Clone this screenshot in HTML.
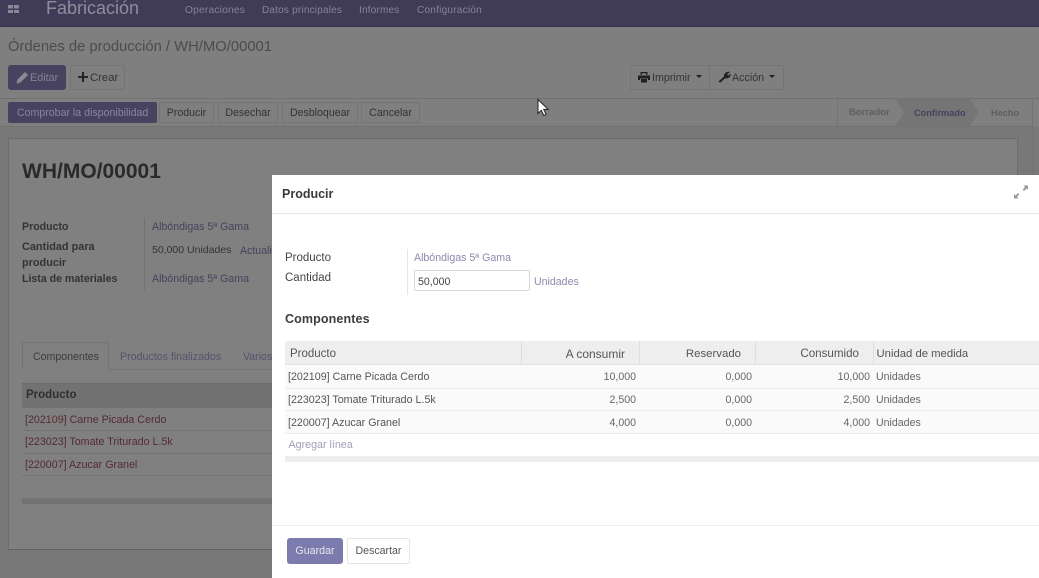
<!DOCTYPE html>
<html><head><meta charset="utf-8">
<style>
html,body{margin:0;padding:0}
body{width:1039px;height:578px;overflow:hidden;position:relative;background:#7f7f7f;font-family:"Liberation Sans",sans-serif;font-size:12px;color:#2b2b2b;filter:blur(.3px)}
.a{position:absolute;white-space:nowrap;line-height:14px}
.box{position:absolute;box-sizing:border-box}
.btn{position:absolute;box-sizing:border-box;border:1px solid #747474;border-radius:2px;text-align:center;color:#333;background:#7f7f7f}
.l{color:#46425c}
.r{color:#552a33}
.m{color:#7c7bad}
.d{color:#444}
.g{color:#333}
.tr{text-align:right}
</style></head><body>
<!-- content background -->
<div class="box" style="left:0;top:127px;width:1039px;height:451px;background:#787878"></div>
<!-- navbar -->
<div class="box" style="left:0;top:0;width:1039px;height:27px;background:#403c58;border-bottom:1px solid #36324a"></div>
<div class="box" style="left:8px;top:5px;width:11px;height:8px;background:
linear-gradient(#8a8896,#8a8896) 0 0/5px 3.5px no-repeat,linear-gradient(#8a8896,#8a8896) 6px 0/5px 3.5px no-repeat,linear-gradient(#8a8896,#8a8896) 0 4.5px/5px 3.5px no-repeat,linear-gradient(#8a8896,#8a8896) 6px 4.5px/5px 3.5px no-repeat"></div>
<div class="a" style="left:46px;top:-3px;font-size:18px;line-height:22px;color:#8f8d9b">Fabricación</div>
<div class="a" style="left:185px;top:3.500px;font-size:10.200px;color:#85839a;letter-spacing:.02em">Operaciones</div>
<div class="a" style="left:262px;top:3.500px;font-size:10px;color:#85839a;letter-spacing:.02em">Datos principales</div>
<div class="a" style="left:359px;top:3.500px;font-size:10px;color:#85839a;letter-spacing:.02em">Informes</div>
<div class="a" style="left:417px;top:3.500px;font-size:10.100px;color:#85839a;letter-spacing:.02em">Configuración</div>
<!-- breadcrumb -->
<div class="a" style="left:8px;top:38px;font-size:14.800px;line-height:18px;color:#4c4c4c">Órdenes de producción / WH/MO/00001</div>
<div class="btn" style="left:8px;top:65px;width:58px;height:25px;background:#46425f;border-color:#46425f;border-radius:3px"></div>
<svg class="box" style="left:16px;top:71px;width:13px;height:13px" viewBox="0 0 13 13"><path d="M0.500 12.500l1-4L9 1l3 3-7.500 7.500z" fill="#8b8996"/></svg>
<div class="a" style="left:30px;top:71px;font-size:10.800px;color:#85838f">Editar</div>
<div class="btn" style="left:70px;top:65px;width:55px;height:25px;border-radius:2px"></div>
<svg class="box" style="left:78px;top:72px;width:10px;height:10px" viewBox="0 0 10 10"><path d="M4.100 0h1.800v4.100H10v1.800H5.900V10H4.100V5.900H0V4.100h4.100z" fill="#1c1c1c"/></svg>
<div class="a" style="left:90px;top:71px;font-size:11.300px;color:#333">Crear</div>
<div class="box" style="left:630px;top:65px;width:154px;height:25px;border:1px solid #747474;border-radius:2px"></div>
<div class="box" style="left:709px;top:65px;width:1px;height:25px;background:#747474"></div>
<svg class="box" style="left:638px;top:71px;width:12px;height:12px" viewBox="0 0 12 12"><path d="M2.500 1h7v3h-1.200V2.200H3.700V4H2.500zM0 4.500h12v4.500h-2V7.500H2V9H0zM3 8h6v3.500H3z" fill="#1f1f1f"/></svg>
<div class="a" style="left:652px;top:71px;font-size:10.700px;color:#333">Imprimir</div>
<div class="box" style="left:696px;top:75px;border:3px solid transparent;border-top:3px solid #222"></div>
<svg class="box" style="left:718px;top:71px;width:13px;height:12px" viewBox="0 0 13 12"><path d="M0.500 10.500L6 5.500C5.500 2.500 8.500 0 12 1L9.200 3.200 10.300 4.600 12.800 2.700c.4 3-2.500 5.300-5.600 4.600L2 11.800z" fill="#222"/></svg>
<div class="a" style="left:732px;top:71px;font-size:10.700px;color:#333">Acción</div>
<div class="box" style="left:769px;top:75px;border:3px solid transparent;border-top:3px solid #222"></div>
<!-- status row -->
<div class="box" style="left:0;top:98px;width:1039px;height:1px;background:#707070"></div>
<div class="box" style="left:0;top:126px;width:1032px;height:1px;background:#727272"></div>
<div class="box" style="left:8px;top:102px;width:149px;height:21px;background:#46425f;border-radius:2px"></div>
<div class="a" style="left:17px;top:105.500px;font-size:10.600px;color:#8886a0">Comprobar la disponibilidad</div>
<div class="btn" style="left:159px;top:102px;width:55px;height:21px;font-size:10.600px;line-height:20px">Producir</div>
<div class="btn" style="left:218px;top:102px;width:60px;height:21px;font-size:10.600px;line-height:20px">Desechar</div>
<div class="btn" style="left:282px;top:102px;width:76px;height:21px;font-size:10.600px;line-height:20px">Desbloquear</div>
<div class="btn" style="left:361px;top:102px;width:59px;height:21px;font-size:10.700px;line-height:20px">Cancelar</div>
<!-- mouse cursor -->
<svg class="box" style="left:536px;top:98px;width:15px;height:20px;z-index:5" viewBox="0 0 15 20"><path d="M2 1.500v14l3.300-3.200 2.400 5.200 2.400-1.100-2.400-5h4.500z" fill="#fff" stroke="#222" stroke-width="1"/></svg>
<!-- statusbar -->
<div class="box" style="left:837px;top:99px;width:1px;height:27px;background:#747474"></div>
<div class="box" style="left:1032px;top:99px;width:1px;height:80px;background:#747474"></div>
<svg class="box" style="left:895px;top:99px;width:100px;height:27px" viewBox="0 0 100 27"><path d="M0 0h75l9 13.500-9 13.500H0l9-13.500z" fill="#757575"/></svg>
<div class="a" style="left:849px;top:105.500px;font-size:9.500px;font-weight:bold;color:#5e5e5e">Borrador</div>
<div class="a" style="left:914px;top:105.500px;font-size:9.200px;font-weight:bold;color:#44415c">Confirmado</div>
<div class="a" style="left:991px;top:105.500px;font-size:9.200px;font-weight:bold;color:#5e5e5e">Hecho</div>
<!-- sheet -->
<div class="box" style="left:8px;top:138px;width:1010px;height:412px;background:#808080;border:1px solid #6c6c6c;border-bottom:1px solid #626262"></div>
<div class="a" style="left:22px;top:160px;font-size:21px;line-height:24px;font-weight:bold;color:#2a2a2a">WH/MO/00001</div>
<div class="a d" style="left:22px;top:220px;font-size:10.600px;font-weight:bold;color:#333">Producto</div>
<div class="a d" style="left:22px;top:240px;font-size:10.900px;font-weight:bold;color:#333">Cantidad para</div>
<div class="a d" style="left:22px;top:256px;font-size:10.900px;font-weight:bold;color:#333">producir</div>
<div class="a d" style="left:22px;top:272px;font-size:10.600px;font-weight:bold;color:#333">Lista de materiales</div>
<div class="box" style="left:144px;top:218px;width:1px;height:72px;background:#727272"></div>
<div class="a l" style="left:152px;top:220px;font-size:10.600px">Albóndigas 5ª Gama</div>
<div class="a g" style="left:152px;top:243px;font-size:10.500px">50,000 Unidades</div>
<div class="a l" style="left:240px;top:244px;font-size:10.600px">Actualizar</div>
<div class="a l" style="left:152px;top:272px;font-size:10.600px">Albóndigas 5ª Gama</div>
<div class="box" style="left:22px;top:369px;width:250px;height:1px;background:#747474"></div>
<div class="box" style="left:22px;top:342px;width:87px;height:28px;background:#808080;border:1px solid #747474;border-bottom:none"></div>
<div class="a" style="left:33px;top:349.500px;font-size:10.600px;color:#3c3c3c">Componentes</div>
<div class="a" style="left:120px;top:349.500px;font-size:10.650px;color:#55536b">Productos finalizados</div>
<div class="a" style="left:243px;top:349.500px;font-size:10.600px;color:#55536b">Varios</div>
<div class="box" style="left:22px;top:383px;width:250px;height:25px;background:#727272;border-top:1px solid #6c6c6c"></div>
<div class="a" style="left:26px;top:388px;font-size:11.500px;font-weight:bold;color:#2e2e2e">Producto</div>
<div class="a r" style="left:25px;top:413px;font-size:10.700px">[202109] Carne Picada Cerdo</div>
<div class="box" style="left:22px;top:430px;width:250px;height:1px;background:#747474"></div>
<div class="a r" style="left:25px;top:435px;font-size:10.700px">[223023] Tomate Triturado L.5k</div>
<div class="box" style="left:22px;top:453px;width:250px;height:1px;background:#747474"></div>
<div class="a r" style="left:25px;top:458px;font-size:10.700px">[220007] Azucar Granel</div>
<div class="box" style="left:22px;top:475px;width:250px;height:1px;background:#747474"></div>
<div class="box" style="left:22px;top:498px;width:250px;height:6px;background:#727272"></div>
<!-- modal -->
<div class="box" style="left:272px;top:175px;width:767px;height:403px;background:#fff"></div>
<div class="a" style="left:282px;top:187px;font-size:12.500px;font-weight:bold;color:#3a3a3a">Producir</div>
<svg class="box" style="left:1014px;top:185px;width:14px;height:14px" viewBox="0 0 14 14"><path d="M9.500 0.500H14V5L12.500 3.500 10 6 8.700 4.700 11 2zM4.500 13.500H0V9L1.500 10.500 4 8 5.300 9.300 3 12z" fill="#999"/></svg>
<div class="box" style="left:272px;top:213px;width:767px;height:1px;background:#e8e8e8"></div>
<div class="a" style="left:285px;top:251px;font-size:11.500px;color:#444">Producto</div>
<div class="a" style="left:285px;top:271px;font-size:11.500px;color:#444">Cantidad</div>
<div class="box" style="left:407px;top:249px;width:1px;height:46px;background:#e6e6e6"></div>
<div class="a m" style="left:414px;top:251px;font-size:10.600px;color:#8c89ac">Albóndigas 5ª Gama</div>
<div class="box" style="left:414px;top:270px;width:116px;height:21px;border:1px solid #d8d8d8;border-radius:2px;background:#fff"></div>
<div class="a" style="left:418px;top:275px;font-size:10.600px;color:#444">50,000</div>
<div class="a m" style="left:534px;top:275px;font-size:10.600px;color:#8c89ac">Unidades</div>
<div class="a" style="left:285px;top:312px;font-size:12.500px;font-weight:bold;color:#3d3d3d;letter-spacing:.01em">Componentes</div>
<!-- modal table -->
<div class="box" style="left:285px;top:341px;width:754px;height:24px;background:#eeeeee;border-bottom:1px solid #e2e2e2"></div>
<div class="box" style="left:521px;top:341px;width:1px;height:24px;background:#dedede"></div>
<div class="box" style="left:639px;top:341px;width:1px;height:24px;background:#dedede"></div>
<div class="box" style="left:755px;top:341px;width:1px;height:24px;background:#dedede"></div>
<div class="box" style="left:873px;top:341px;width:1px;height:24px;background:#dedede"></div>
<div class="a" style="left:290px;top:346.500px;font-size:11.500px;color:#555">Producto</div>
<div class="a tr" style="right:414px;top:346.500px;font-size:12px;color:#555">A consumir</div>
<div class="a tr" style="right:298px;top:346.500px;font-size:11.400px;color:#555">Reservado</div>
<div class="a tr" style="right:180px;top:346.500px;font-size:11.600px;color:#555">Consumido</div>
<div class="a" style="left:876.500px;top:346.500px;font-size:11.300px;color:#555">Unidad de medida</div>
<div class="box" style="left:285px;top:365px;width:754px;height:23px;background:#fafafa"></div>
<div class="box" style="left:285px;top:388px;width:754px;height:22px;background:#fafafa;border-top:1px solid #ececec"></div>
<div class="box" style="left:285px;top:410px;width:754px;height:23px;background:#fafafa;border-top:1px solid #ececec"></div>
<div class="box" style="left:285px;top:433px;width:754px;height:1px;background:#ececec"></div>
<div class="a" style="left:288px;top:369.500px;font-size:10.700px;color:#555">[202109] Carne Picada Cerdo</div>
<div class="a" style="left:288px;top:392.500px;font-size:10.700px;color:#555">[223023] Tomate Triturado L.5k</div>
<div class="a" style="left:288px;top:415.500px;font-size:10.700px;color:#555">[220007] Azucar Granel</div>
<div class="a tr" style="right:403px;top:369.500px;font-size:10.600px;color:#666">10,000</div>
<div class="a tr" style="right:403px;top:392.500px;font-size:10.600px;color:#666">2,500</div>
<div class="a tr" style="right:403px;top:415.500px;font-size:10.600px;color:#666">4,000</div>
<div class="a tr" style="right:287px;top:369.500px;font-size:10.600px;color:#666">0,000</div>
<div class="a tr" style="right:287px;top:392.500px;font-size:10.600px;color:#666">0,000</div>
<div class="a tr" style="right:287px;top:415.500px;font-size:10.600px;color:#666">0,000</div>
<div class="a tr" style="right:169px;top:369.500px;font-size:10.600px;color:#666">10,000</div>
<div class="a tr" style="right:169px;top:392.500px;font-size:10.600px;color:#666">2,500</div>
<div class="a tr" style="right:169px;top:415.500px;font-size:10.600px;color:#666">4,000</div>
<div class="a" style="left:876px;top:369.500px;font-size:10.600px;color:#666">Unidades</div>
<div class="a" style="left:876px;top:392.500px;font-size:10.600px;color:#666">Unidades</div>
<div class="a" style="left:876px;top:415.500px;font-size:10.600px;color:#666">Unidades</div>
<div class="a" style="left:288.500px;top:437.500px;font-size:10.700px;color:#a09eba">Agregar línea</div>
<div class="box" style="left:285px;top:456px;width:754px;height:6px;background:#eeeeee"></div>
<!-- footer -->
<div class="box" style="left:272px;top:525px;width:767px;height:1px;background:#ececec"></div>
<div class="box" style="left:287px;top:538px;width:56px;height:26px;background:#7c7bad;border-radius:3px;text-align:center;font-size:10.700px;line-height:26px;color:#e6e5ef">Guardar</div>
<div class="box" style="left:347px;top:538px;width:63px;height:26px;background:#fff;border:1px solid #e6e6e6;border-radius:2px;text-align:center;font-size:10.600px;line-height:24px;color:#555">Descartar</div>
</body></html>
